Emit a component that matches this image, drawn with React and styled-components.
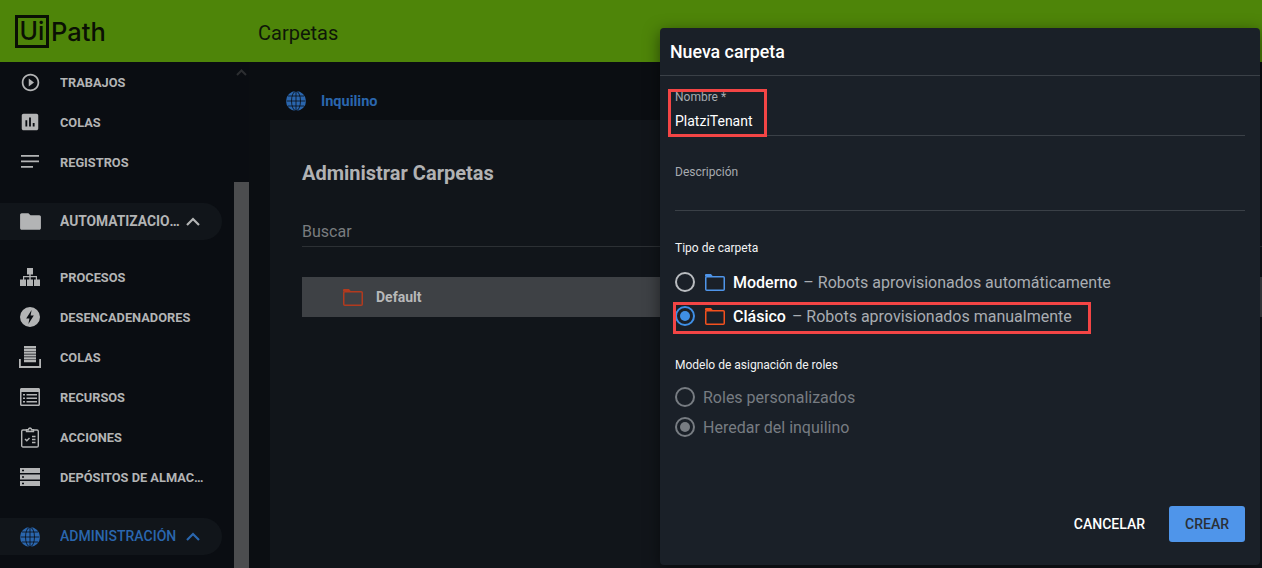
import React from "react";
import styled, { createGlobalStyle } from "styled-components";

const GlobalStyle = createGlobalStyle`
  html, body {
    margin: 0;
    height: 100%;
    background: #0b0e12;
    font-family: Roboto, "Liberation Sans", sans-serif;
    overflow: hidden;
  }
`;

const Page = styled.div`
  position: relative;
  width: 1262px;
  height: 568px;
  display: flex;
  flex-direction: column;
  overflow: hidden;
`;

const Header = styled.header`
  height: 62px;
  flex: none;
  display: flex;
  align-items: center;
  background: #4e8509;
  color: #0e1708;
`;

const Logo = styled.div`
  width: 258px;
  display: flex;
  align-items: center;
  padding-left: 15px;
  box-sizing: border-box;
  color: #0a1004;
  font-family: Inter, Roboto, sans-serif;
  font-weight: 500;
`;

const LogoBox = styled.span`
  width: 34px;
  height: 33px;
  box-sizing: border-box;
  border: 3px solid #0a1004;
  display: flex;
  align-items: center;
  justify-content: center;
  font-size: 25px;
`;

const LogoWord = styled.span`
  margin-left: 2px;
  font-size: 25.5px;
`;

const HeaderTitle = styled.div`
  font-size: 20px;
  font-weight: 400;
  margin-top: 4px;
`;

const Body = styled.div`
  flex: 1;
  display: flex;
  min-height: 0;
`;

const Sidebar = styled.aside`
  width: 249px;
  flex: none;
  display: flex;
  background: #0a0d12;
`;

const Nav = styled.nav`
  width: 234px;
  flex: none;
`;

const Row = styled.div`
  height: 40px;
  display: flex;
  align-items: center;
  padding: 0 28px 0 20px;
  color: #b3b4b5;
`;

const Group = styled.div`
  width: 222px;
  height: 37px;
  margin: ${(p) => p.$top}px 0 ${(p) => p.$bottom}px;
  box-sizing: border-box;
  display: flex;
  align-items: center;
  padding: 0 21px 0 20px;
  background: #11151a;
  border-radius: 0 19px 19px 0;
  color: ${(p) => (p.$active ? "#2a66ae" : "#b3b4b5")};
`;

const IconSlot = styled.span`
  width: 20px;
  height: 20px;
  flex: none;
  margin-right: 20px;
  display: flex;
  align-items: center;
  justify-content: center;

  svg {
    flex: none;
  }
`;

const Label = styled.span`
  flex: 1;
  min-width: 0;
  font-size: 12.8px;
  font-weight: 700;
  white-space: nowrap;
  overflow: hidden;
  text-overflow: ellipsis;
`;

const GroupLabel = styled(Label)`
  font-size: ${(p) => (p.$active ? 14 : 13.8)}px;
  line-height: 16px;
  padding-bottom: 1px;
  font-weight: ${(p) => (p.$active ? 500 : 700)};
`;

const GroupChevron = styled.svg`
  flex: none;
  margin-left: 1px;
`;

const Scroll = styled.div`
  width: 15px;
  flex: none;
  position: relative;
  padding-top: 120px;
  box-sizing: border-box;
  display: flex;
  flex-direction: column;
  align-items: center;
`;

const ScrollArrow = styled.svg`
  position: absolute;
  top: 6px;
  left: 1px;
`;

const ScrollThumb = styled.div`
  width: 15px;
  flex: 1;
  background: #4c4d4f;
`;

const Main = styled.main`
  flex: 1;
  min-width: 0;
  display: flex;
  flex-direction: column;
  padding-left: 21px;
`;

const Crumb = styled.div`
  height: 58px;
  flex: none;
  display: flex;
  align-items: center;
  padding: 20px 0 0 16px;
  box-sizing: border-box;
  gap: 15px;
  color: #2a66ae;
  font-size: 14.5px;
  font-weight: 700;
`;

const Card = styled.section`
  flex: 1;
  background: #11151a;
  padding: 40px 0 0 32px;
`;

const CardTitle = styled.h2`
  margin: 0;
  height: 26px;
  line-height: 26px;
  font-size: 20px;
  font-weight: 700;
  color: #b1b2b3;
`;

const Search = styled.div`
  margin-top: 35px;
  height: 25px;
  line-height: 22px;
  font-size: 16px;
  color: #797c7f;
  border-bottom: 1px solid #2c3034;
`;

const FolderRow = styled.div`
  margin-top: 30px;
  height: 40px;
  display: flex;
  align-items: center;
  padding-left: 41px;
  background: #3e4145;
  color: #b7b8b9;
  font-size: 14px;
  font-weight: 700;
  gap: 13px;
`;

const Dialog = styled.div`
  position: absolute;
  top: 28px;
  left: 660px;
  width: 600px;
  height: 537px;
  display: flex;
  flex-direction: column;
  background: #1a2028;
  border-radius: 4px;
  box-shadow: 0 4px 16px rgba(0, 0, 0, 0.5);
  color: #fff;
`;

const DialogTitle = styled.div`
  height: 48px;
  flex: none;
  box-sizing: border-box;
  padding: 0 10px;
  display: flex;
  align-items: center;
  border-bottom: 1px solid #3a4047;
  font-size: 17.8px;
  font-weight: 500;
`;

const DialogBody = styled.div`
  flex: 1;
  padding: 0 15px;
  display: flex;
  flex-direction: column;
`;

const Field = styled.div`
  margin-top: ${(p) => p.$top}px;
  border-bottom: 1px solid #3a4047;
`;

const FieldLabel = styled.div`
  height: 14px;
  line-height: 14px;
  font-size: 12px;
  color: #a7abb0;
`;

const FieldValue = styled.div`
  height: 24px;
  padding-top: 7px;
  line-height: 20px;
  font-size: 14px;
  color: #fff;
`;

const SectionLabel = styled.div`
  margin-top: ${(p) => p.$top}px;
  margin-bottom: ${(p) => p.$bottom}px;
  height: 14px;
  line-height: 14px;
  font-size: 12px;
  color: #f2f3f4;
`;

const RadioRow = styled.div`
  height: ${(p) => p.$height}px;
  display: flex;
  align-items: center;
  font-size: 16px;
  color: ${(p) => (p.$disabled ? "#777c82" : "#a9adb2")};
`;

const Radio = styled.span`
  width: 20px;
  height: 20px;
  flex: none;
  box-sizing: border-box;
  margin-right: 8px;
  border: 2px solid ${(p) => p.$color};
  border-radius: 50%;
  display: flex;
  align-items: center;
  justify-content: center;

  &::after {
    content: "";
    display: ${(p) => (p.$checked ? "block" : "none")};
    width: 10px;
    height: 10px;
    border-radius: 50%;
    background: ${(p) => p.$color};
  }
`;

const FolderSlot = styled.span`
  display: flex;
  flex: none;
  margin: 0 8px 0 2px;
`;

const Strong = styled.span`
  color: #fff;
  font-weight: 500;
  margin-right: 6px;
`;

const Footer = styled.div`
  margin-top: auto;
  padding-bottom: 23px;
  display: flex;
  align-items: center;
  justify-content: flex-end;
  gap: 24px;
`;

const TextButton = styled.button`
  padding: 0;
  border: 0;
  background: none;
  color: #fff;
  font: 500 14px Roboto, sans-serif;
`;

const PrimaryButton = styled.button`
  width: 76px;
  height: 36px;
  border: 0;
  border-radius: 3px;
  background: #4f95ea;
  color: #2a3037;
  font: 500 14px Roboto, sans-serif;
`;

const Callout = styled.div`
  position: absolute;
  top: ${(p) => p.$top}px;
  left: ${(p) => p.$left}px;
  width: ${(p) => p.$width}px;
  height: ${(p) => p.$height}px;
  box-sizing: border-box;
  border: 3px solid #f34545;
  pointer-events: none;
`;

const Svg = ({ d, width = 24, height = width, box = "0 0 24 24" }) => (
  <svg width={width} height={height} viewBox={box} fill="currentColor">
    <path d={d} />
  </svg>
);

const Outline = ({ color }) => (
  <svg width="20" height="17" viewBox="0 0 20 17">
    <path d="M0 1a1 1 0 0 1 1-1h5l2 2.500H0z" fill={color} />
    <rect x="0.75" y="2.75" width="18.5" height="13.5" rx="1" fill="none" stroke={color} strokeWidth="1.5" />
  </svg>
);

const Globe = ({ size = 20 }) => (
  <svg width={size} height={size} viewBox="0 0 20 20" fill="none">
    <circle cx="10" cy="10" r="10" fill="currentColor" />
    <g stroke="#0a0d12" strokeWidth="0.8">
      <ellipse cx="10" cy="10" rx="4.5" ry="9.8" />
      <path d="M10 0v20M0.5 10h19M2 5h16M2 15h16" />
    </g>
  </svg>
);

const Chevron = () => (
  <GroupChevron width="16" height="10" viewBox="0 0 16 10" fill="none" stroke="currentColor" strokeWidth="2.2">
    <path d="M2 8l6-6 6 6" />
  </GroupChevron>
);

const icons = {
  play: <Svg width={21} d="M10 16.5l6-4.5-6-4.5v9zM12 2C6.48 2 2 6.48 2 12s4.48 10 10 10 10-4.48 10-10S17.52 2 12 2zm0 18c-4.41 0-8-3.59-8-8s3.59-8 8-8 8 3.59 8 8-3.59 8-8 8z" />,
  chart: <Svg width={22} d="M19 3H5c-1.1 0-2 .9-2 2v14c0 1.1.9 2 2 2h14c1.1 0 2-.9 2-2V5c0-1.1-.9-2-2-2zM9 17H7v-7h2v7zm4 0h-2V7h2v10zm4 0h-2v-4h2v4z" />,
  logs: <Svg width={20} box="0 0 20 20" d="M1 3h18v1.800H1zM1 8.500h18v1.800H1zM1 14h12v1.800H1z" />,
  folder: <Svg width={25} d="M10 4H3.500C2.700 4 2 4.700 2 5.500v13c0 .8.7 1.500 1.500 1.500h17c.8 0 1.500-.7 1.500-1.500v-11c0-.8-.7-1.500-1.500-1.500H12z" />,
  tree: <Svg width={20} height={18} box="0 0 20 18" d="M7 0h6v6.500h-2.300V8H17v3.500h-1.200V9.200h-5.100v2.300H9.300V9.200H4.200v2.300H3V8h6.300V6.500H7zM0 11.500h6V18H0zM7 11.500h6V18H7zM14 11.500h6V18h-6z" />,
  bolt: <Svg width={20} box="0 0 20 20" d="M10 0a10 10 0 1 0 0 20 10 10 0 0 0 0-20zm-1.600 17l1-5.500H6.200L11.600 3l-1 5.600h3.200z" />,
  queue: <Svg width={22} box="0 0 22 22" d="M5 0h12v2.200H5zM5 2.800h12V5H5zM5 5.600h12v2.200H5zM5 8.400h12v2.200H5zM5 11.200h12v2.200H5zM5 14h12v2.200H5zM0 13h1.800v7H20.200v-7H22v9H0z" />,
  list: <Svg width={20} box="0 0 20 20" d="M1.500 1h17c.8 0 1.500.7 1.500 1.500v15c0 .8-.7 1.500-1.500 1.500h-17C.7 19 0 18.300 0 17.500v-15C0 1.700.7 1 1.500 1zM1.500 5v12.500h17V5zM3 7h2v1.500H3zM6.500 7H17v1.500H6.500zM3 10.500h2V12H3zM6.500 10.500H17V12H6.500zM3 14h2v1.500H3zM6.500 14H17v1.500H6.500z" />,
  clip: (
    <svg width="18" height="21" viewBox="0 0 18 21" fill="none" stroke="currentColor" strokeWidth="1.4">
      <path d="M5.500 3H2a1.300 1.300 0 0 0-1.300 1.300v14.400A1.300 1.300 0 0 0 2 20h14a1.300 1.300 0 0 0 1.300-1.300V4.300A1.300 1.300 0 0 0 16 3h-3.500" />
      <path d="M5.500 4.500V2.800h2A1.700 1.700 0 0 1 9 1a1.700 1.700 0 0 1 1.500 1.800h2v1.700z" />
      <path d="M4 12l1.800 1.800L8.500 11M11 9.500h3.500M11 12.500h3.500M11 15.500h3.500" />
    </svg>
  ),
  storage: <Svg width={20} box="0 0 20 20" d="M0 1h20v5H0zM2 2.700v1.600h2V2.700zM0 7.500h20v5H0zM2 9.200v1.600h2V9.200zM0 14h20v5H0zM2 15.700v1.600h2v-1.600z" />,
};

const topItems = [
  ["play", "Trabajos"],
  ["chart", "Colas"],
  ["logs", "Registros"],
];

const automationItems = [
  ["tree", "Procesos"],
  ["bolt", "Desencadenadores"],
  ["queue", "Colas"],
  ["list", "Recursos"],
  ["clip", "Acciones"],
  ["storage", "Depósitos de almacenamiento"],
];

const NavRow = ({ icon, text }) => (
  <Row>
    <IconSlot>{icons[icon]}</IconSlot>
    <Label>{text.toUpperCase()}</Label>
  </Row>
);

export default function App() {
  return (
    <Page>
      <GlobalStyle />
      <Header>
        <Logo>
          <LogoBox>Ui</LogoBox>
          <LogoWord>Path</LogoWord>
        </Logo>
        <HeaderTitle>Carpetas</HeaderTitle>
      </Header>
      <Body>
        <Sidebar>
          <Nav>
            {topItems.map(([icon, text]) => (
              <NavRow key={text} icon={icon} text={text} />
            ))}
            <Group $top={21} $bottom={17}>
              <IconSlot>{icons.folder}</IconSlot>
              <GroupLabel>AUTOMATIZACIONES</GroupLabel>
              <Chevron />
            </Group>
            {automationItems.map(([icon, text]) => (
              <NavRow key={icon} icon={icon} text={text} />
            ))}
            <Group $active $top={21} $bottom={0}>
              <IconSlot>
                <Globe />
              </IconSlot>
              <GroupLabel $active>ADMINISTRACIÓN</GroupLabel>
              <Chevron />
            </Group>
          </Nav>
          <Scroll>
            <ScrollArrow width="13" height="8" viewBox="0 0 13 8" fill="none" stroke="#2c2e31" strokeWidth="2">
              <path d="M2 7l4.500-4.500L11 7" />
            </ScrollArrow>
            <ScrollThumb />
          </Scroll>
        </Sidebar>
        <Main>
          <Crumb>
            <Globe />
            Inquilino
          </Crumb>
          <Card>
            <CardTitle>Administrar Carpetas</CardTitle>
            <Search>Buscar</Search>
            <FolderRow>
              <Outline color="#b23a1e" />
              Default
            </FolderRow>
          </Card>
        </Main>
      </Body>
      <Dialog>
        <DialogTitle>Nueva carpeta</DialogTitle>
        <DialogBody>
          <Field $top={14}>
            <FieldLabel>Nombre *</FieldLabel>
            <FieldValue>PlatziTenant</FieldValue>
          </Field>
          <Field $top={29}>
            <FieldLabel>Descripción</FieldLabel>
            <FieldValue />
          </Field>
          <SectionLabel $top={30} $bottom={10}>Tipo de carpeta</SectionLabel>
          <RadioRow $height={34}>
            <Radio $color="#b9bcc0" />
            <FolderSlot>
              <Outline color="#4f95ea" />
            </FolderSlot>
            <Strong>Moderno</Strong>– Robots aprovisionados automáticamente
          </RadioRow>
          <RadioRow $height={34}>
            <Radio $color="#3f8fe6" $checked />
            <FolderSlot>
              <Outline color="#f4511e" />
            </FolderSlot>
            <Strong>Clásico</Strong>– Robots aprovisionados manualmente
          </RadioRow>
          <SectionLabel $top={25} $bottom={10}>Modelo de asignación de roles</SectionLabel>
          <RadioRow $height={30} $disabled>
            <Radio $color="#777c82" />
            Roles personalizados
          </RadioRow>
          <RadioRow $height={30} $disabled>
            <Radio $color="#777c82" $checked />
            Heredar del inquilino
          </RadioRow>
          <Footer>
            <TextButton>CANCELAR</TextButton>
            <PrimaryButton>CREAR</PrimaryButton>
          </Footer>
        </DialogBody>
        <Callout $top={61} $left={8} $width={99} $height={48} />
        <Callout $top={274} $left={13} $width={418} $height={32} />
      </Dialog>
    </Page>
  );
}
